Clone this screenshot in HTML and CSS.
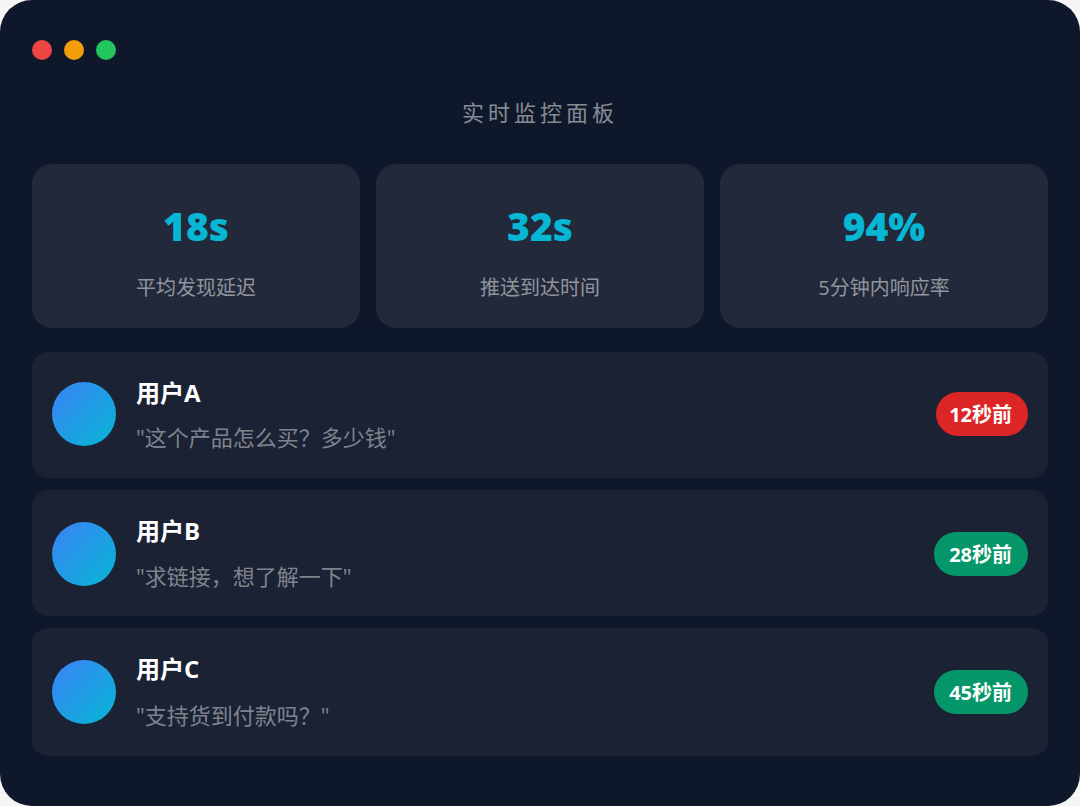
FILE: index.html
```html
<!DOCTYPE html>
<html lang="zh-CN">

<head>
    <meta charset="UTF-8">
    <meta name="viewport" content="width=device-width, initial-scale=1.0">
    <title>实时监控面板</title>
    <link rel="stylesheet" href="styles.css">
</head>

<body>
    <div class="panel">
        <div class="dots">
            <span class="dot red"></span>
            <span class="dot orange"></span>
            <span class="dot green"></span>
        </div>
        <div class="title">实时监控面板</div>

        <div class="stats">
            <div class="stat">
                <div class="num">18s</div>
                <div class="label">平均发现延迟</div>
            </div>
            <div class="stat">
                <div class="num">32s</div>
                <div class="label">推送到达时间</div>
            </div>
            <div class="stat">
                <div class="num">94%</div>
                <div class="label">5分钟内响应率</div>
            </div>
        </div>

        <div class="list">
            <div class="row row-a">
                <div class="avatar"></div>
                <div class="info">
                    <div class="name">用户A</div>
                    <div class="msg">"这个产品怎么买？多少钱"</div>
                </div>
                <div class="badge hot">12秒前</div>
            </div>
            <div class="row row-b">
                <div class="avatar"></div>
                <div class="info">
                    <div class="name">用户B</div>
                    <div class="msg">"求链接，想了解一下"</div>
                </div>
                <div class="badge ok">28秒前</div>
            </div>
            <div class="row row-c">
                <div class="avatar"></div>
                <div class="info">
                    <div class="name">用户C</div>
                    <div class="msg">"支持货到付款吗？"</div>
                </div>
                <div class="badge ok">45秒前</div>
            </div>
        </div>
    </div>
</body>

</html>
```

FILE: styles.css
```css
* {
    box-sizing: border-box;
}

body {
    margin: 0;
    background: #f5f5f5;
    font-family: "Open Sans", "Noto Sans CJK SC", sans-serif;
}

.panel {
    width: 1080px;
    height: 806px;
    padding: 40px 32px 0;
    background: #0f172a;
    border-radius: 32px;
    overflow: hidden;
}

.dots {
    display: flex;
    gap: 12px;
}

.dot {
    width: 20px;
    height: 20px;
    border-radius: 50%;
}

.red {
    background: #ef4444;
}

.orange {
    background: #f59e0b;
}

.green {
    background: #22c55e;
}

.title {
    margin-top: 36px;
    height: 32px;
    line-height: 32px;
    text-align: center;
    font-size: 22px;
    letter-spacing: 4px;
    color: rgba(255, 255, 255, 0.5);
}

.stats {
    display: flex;
    gap: 16px;
    margin-top: 36px;
}

.stat {
    flex: 1;
    height: 164px;
    padding-top: 36px;
    background: rgba(255, 255, 255, 0.08);
    border-radius: 20px;
    text-align: center;
}

.num {
    height: 52px;
    line-height: 52px;
    font-family: "Noto Sans", "Noto Sans CJK SC", sans-serif;
    font-size: 39px;
    font-weight: 900;
    color: #06b6d4;
}

.label {
    margin-top: 20px;
    height: 32px;
    line-height: 32px;
    font-size: 20px;
    color: rgba(255, 255, 255, 0.5);
}

.list {
    display: flex;
    flex-direction: column;
    gap: 12px;
    margin-top: 24px;
}

.row {
    display: flex;
    align-items: center;
    gap: 20px;
    height: 126px;
    padding: 0 20px;
    background: rgba(255, 255, 255, 0.05);
    border-radius: 16px;
}

.row-a {
    padding-bottom: 2px;
}

.row-b {
    padding-top: 2px;
}

.row-c {
    height: 128px;
}

.avatar {
    width: 64px;
    height: 64px;
    border-radius: 50%;
    background: linear-gradient(135deg, #3b82f6, #06b6d4);
}

.info {
    flex: 1;
}

.row-a .info {
    margin-top: 2px;
}

.row-b .info {
    padding-bottom: 1px;
}

.name {
    height: 32px;
    line-height: 32px;
    font-size: 24px;
    font-weight: 700;
    color: #fff;
}

.msg {
    margin-top: 14px;
    height: 32px;
    line-height: 32px;
    font-size: 22px;
    color: rgba(255, 255, 255, 0.45);
}

.row-a .msg {
    margin-top: 12px;
}

.row-b .msg {
    margin-top: 13px;
}

.badge {
    height: 44px;
    line-height: 45px;
    padding: 0 16px 0 15px;
    border-radius: 22px;
    font-size: 20px;
    font-weight: 700;
    color: #fff;
}

.hot {
    background: #dc2626;
    padding-left: 13px;
}

.ok {
    background: #059669;
}
```
